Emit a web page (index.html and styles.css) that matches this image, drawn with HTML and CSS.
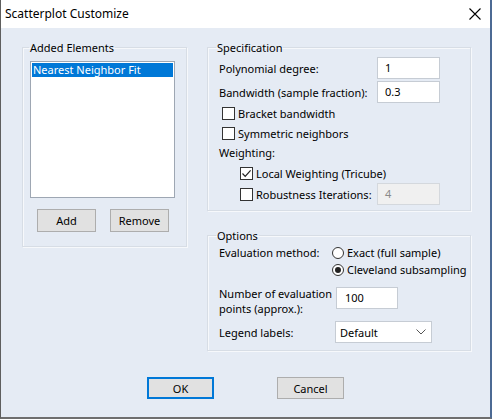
FILE: index.html
```html
<!DOCTYPE html>
<html>
<head>
<meta charset="utf-8">
<link rel="stylesheet" href="styles.css">
</head>
<body>
<div class="window">
  <div class="titlebar">
    <span class="title">Scatterplot Customize</span>
    <svg class="close" width="12" height="12" viewBox="0 0 12 12"><path d="M0.5 0.5 L11.5 11.5 M11.5 0.5 L0.5 11.5" stroke="#000" stroke-width="1.1" fill="none"/></svg>
  </div>
  <div class="content">
    <div class="main">
      <fieldset class="group group-left">
        <legend>Added Elements</legend>
        <div class="listbox">
          <div class="list-item selected">Nearest Neighbor Fit</div>
        </div>
        <div class="btn-row">
          <button class="btn">Add</button>
          <button class="btn">Remove</button>
        </div>
      </fieldset>
      <div class="right-col">
        <fieldset class="group group-spec">
          <legend>Specification</legend>
          <div class="field-row row-first">
            <span class="label">Polynomial degree:</span>
            <div class="edit">1</div>
          </div>
          <div class="field-row row-second">
            <span class="label">Bandwidth (sample fraction):</span>
            <div class="edit">0.3</div>
          </div>
          <div class="check-row">
            <span class="checkbox"></span><span>Bracket bandwidth</span>
          </div>
          <div class="check-row">
            <span class="checkbox"></span><span>Symmetric neighbors</span>
          </div>
          <div class="text-row">Weighting:</div>
          <div class="check-row indent">
            <span class="checkbox"><svg width="11" height="11" viewBox="0 0 11 11"><path d="M1.5 5.5 L4.2 8.3 L9.6 2.4" stroke="#222" stroke-width="1.2" fill="none"/></svg></span><span>Local Weighting (Tricube)</span>
          </div>
          <div class="check-row indent row-robust">
            <span class="checkbox"></span><span class="robust-label">Robustness Iterations:</span>
            <div class="edit disabled">4</div>
          </div>
        </fieldset>
        <fieldset class="group group-opts">
          <legend>Options</legend>
          <div class="opt-row">
            <span class="label eval-label">Evaluation method:</span>
            <div class="radios">
              <div class="radio-row"><span class="radio"></span><span>Exact (full sample)</span></div>
              <div class="radio-row"><span class="radio checked"></span><span>Cleveland subsampling</span></div>
            </div>
          </div>
          <div class="opt-row row-number">
            <span class="label num-label">Number of evaluation points (approx.):</span>
            <div class="edit edit-num">100</div>
          </div>
          <div class="opt-row row-legend">
            <span class="label legend-label">Legend labels:</span>
            <div class="select"><span>Default</span><svg width="10" height="6" viewBox="0 0 10 6"><path d="M0.5 0.5 L5 5 L9.5 0.5" stroke="#555" stroke-width="1" fill="none"/></svg></div>
          </div>
        </fieldset>
      </div>
    </div>
    <div class="footer">
      <button class="btn btn-wide btn-default">OK</button>
      <button class="btn btn-wide">Cancel</button>
    </div>
  </div>
</div>
</body>
</html>
```
FILE: styles.css
```css
html, body {
  margin: 0;
  padding: 0;
  background: #e5ebf4;
}
body {
  font-family: "Noto Sans", "Open Sans", sans-serif;
  font-size: 11px;
  color: #000;
}
.window {
  width: 492px;
  height: 419px;
  box-sizing: border-box;
  border-left: 1px solid #5e5e5e;
  border-right: 2px solid #4c6a94;
  border-bottom: 2px solid #6e6e6e;
  display: flex;
  flex-direction: column;
  background: #e5ebf4;
}
.titlebar {
  height: 28px;
  flex: none;
  background: #fff;
  display: flex;
  align-items: center;
  justify-content: space-between;
  padding: 0 9px 0 4px;
}
.title {
  font-size: 12px;
  margin-top: -1px;
}
.close {
  margin-top: -1px;
}
.content {
  flex: 1;
  display: flex;
  flex-direction: column;
  padding: 12px 0 0 21px;
}
.main {
  display: flex;
  align-items: flex-start;
  gap: 20px;
}
.group {
  margin: 0;
  border: 1px solid #d7dde5;
  box-shadow: inset 1px 1px 0 #f6f8fb, 1px 1px 0 #f6f8fb;
  border-radius: 0;
  min-width: 0;
  box-sizing: border-box;
}
.group legend {
  padding: 0 1px;
  line-height: 15px;
  height: 15px;
}
.group-left {
  width: 165px;
  height: 207px;
  padding: 6px 10px 0 7px;
}
.group-left legend {
  margin-left: -1px;
}
.listbox {
  width: 145px;
  height: 137px;
  box-sizing: border-box;
  border: 1px solid #9ea7b3;
  background: #fff;
  padding: 1px;
}
.list-item {
  height: 14px;
  line-height: 14px;
  padding-left: 1px;
  white-space: nowrap;
}
.list-item.selected {
  background: #0078d7;
  color: #fff;
}
.btn-row {
  display: flex;
  gap: 14px;
  margin: 11px 0 0 7px;
}
.btn {
  font-family: inherit;
  font-size: 11px;
  color: #000;
  width: 59px;
  height: 23px;
  box-sizing: border-box;
  background: #e1e1e1;
  border: 1px solid #adadad;
  border-radius: 0;
  padding: 0;
  margin: 0;
}
.right-col {
  display: flex;
  flex-direction: column;
  gap: 17px;
}
.group-spec, .group-opts {
  width: 264px;
  padding: 0 0 0 11px;
}
.group-spec legend, .group-opts legend {
  margin-left: -3px;
}
.group-spec {
  height: 171px;
  padding-top: 2px;
}
.field-row {
  display: flex;
  align-items: center;
  height: 22px;
}
.row-second {
  margin-top: 2px;
}
.label {
  flex: none;
  white-space: nowrap;
}
.field-row .label {
  width: 158px;
}
.edit {
  width: 63px;
  height: 22px;
  box-sizing: border-box;
  background: #fff;
  border: 1px solid #c6ccd4;
  padding: 0 0 0 7px;
  line-height: 20px;
}
.edit.disabled {
  background: #f0f0f0;
  border-color: #d4d8dd;
  color: #8a8a8a;
  height: 22px;
}
.check-row {
  display: flex;
  align-items: center;
  height: 20px;
  padding-left: 3px;
}
.check-row.indent {
  padding-left: 21px;
}
.checkbox {
  width: 13px;
  height: 13px;
  box-sizing: border-box;
  border: 1px solid #333;
  background: #fff;
  flex: none;
  margin-right: 3px;
  display: flex;
  align-items: center;
  justify-content: center;
}
.text-row {
  height: 20px;
  line-height: 20px;
}
.row-robust {
  height: 22px;
}
.robust-label {
  width: 121px;
}
.group-opts {
  height: 123px;
  padding-top: 1px;
}
.opt-row {
  display: flex;
  align-items: flex-start;
}
.eval-label {
  width: 113px;
  line-height: 17px;
  height: 17px;
}
.radios {
  display: flex;
  flex-direction: column;
}
.radio-row {
  display: flex;
  align-items: center;
  height: 17px;
}
.radio {
  width: 12px;
  height: 12px;
  box-sizing: border-box;
  border: 1px solid #333;
  border-radius: 50%;
  background: #fff;
  margin-right: 3px;
  position: relative;
}
.radio.checked::after {
  content: "";
  position: absolute;
  left: 2px;
  top: 2px;
  width: 6px;
  height: 6px;
  border-radius: 50%;
  background: #222;
}
.row-number {
  margin-top: 8px;
}
.num-label {
  width: 117px;
  white-space: normal;
  line-height: 15px;
}
.edit-num {
  width: 62px;
  height: 22px;
  margin-top: 1px;
  padding-left: 8px;
}
.row-legend {
  margin-top: 5px;
  align-items: center;
}
.legend-label {
  width: 116px;
}
.select {
  width: 97px;
  height: 22px;
  box-sizing: border-box;
  background: #fff;
  border: 1px solid #c6ccd4;
  display: flex;
  align-items: center;
  justify-content: space-between;
  padding: 0 5px 0 4px;
}
.footer {
  display: flex;
  justify-content: center;
  gap: 63px;
  margin: 26px 0 0 -21px;
}
.btn-wide {
  width: 67px;
  height: 22px;
}
.btn-default {
  border: 2px solid #0078d7;
}
```
